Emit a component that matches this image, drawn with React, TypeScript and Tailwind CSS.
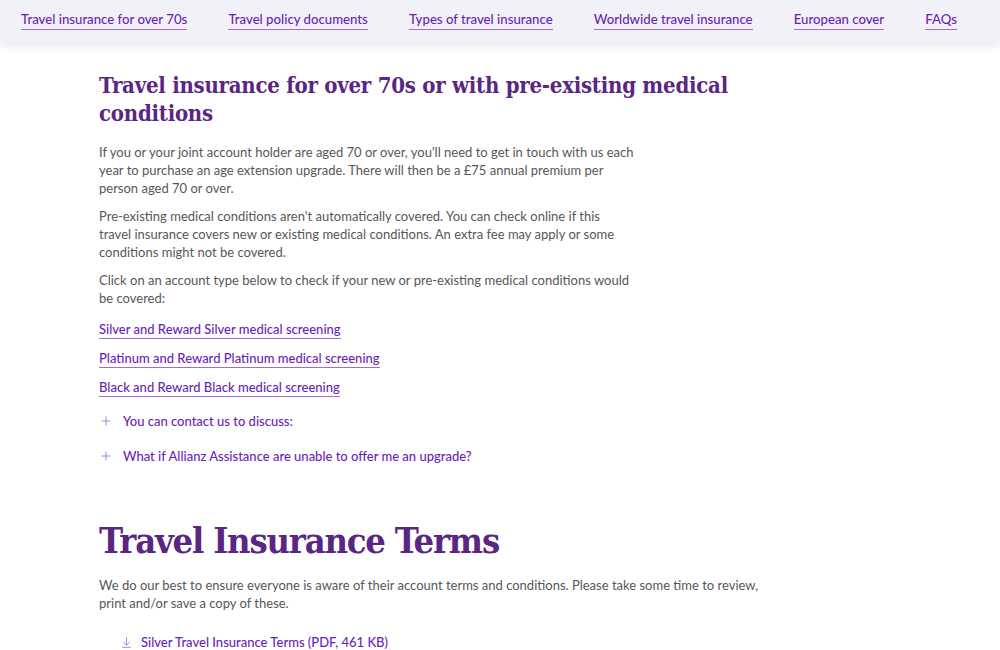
import React from "react";
import { Plus, ArrowDownToLine } from "lucide-react";

const navLinks = [
	"Travel insurance for over 70s",
	"Travel policy documents",
	"Types of travel insurance",
	"Worldwide travel insurance",
	"European cover",
	"FAQs",
];

const screeningLinks = [
	"Silver and Reward Silver medical screening",
	"Platinum and Reward Platinum medical screening",
	"Black and Reward Black medical screening",
];

const accordion = [
	"You can contact us to discuss:",
	"What if Allianz Assistance are unable to offer me an upgrade?",
];

const slab = { fontFamily: '"DejaVu Serif Condensed", "DejaVu Serif", serif' };

export default function App() {
	return (
		<div
			className="min-h-[650px] bg-white text-[#575757]"
			style={{ fontFamily: "Lato, 'Noto Sans', sans-serif" }}
		>
			{/* Sub navigation */}
			<nav className="h-[43px] bg-[#f2f1f7] shadow-[0_4px_8px_rgba(0,0,0,0.08)] flex items-center justify-between pl-[21px] pr-[43px] pb-[4px]">
				{navLinks.map((l) => (
					<a
						key={l}
						href="#"
						className="text-[13.2px] font-medium text-[#6b1fb8] border-b border-[#a36be0] leading-[18px] pb-[1px]"
					>
						{l}
					</a>
				))}
			</nav>

			<main className="pl-[99px] pt-[28px]">
				<section className="w-[640px]">
					<h2
						className="text-[22px] leading-[28px] font-bold tracking-[-0.25px] text-[#5a2683]"
						style={slab}
					>
						Travel insurance for over 70s or with pre-existing medical conditions
					</h2>

					<div className="w-[535px] mt-[16px] text-[13px] leading-[18px] flex flex-col gap-[10px]">
						<p>
							If you or your joint account holder are aged 70 or over, you'll need to get in
							touch with us each year to purchase an age extension upgrade. There will then
							be a £75 annual premium per person aged 70 or over.
						</p>
						<p>
							Pre-existing medical conditions aren't automatically covered. You can check
							online if this travel insurance covers new or existing medical conditions. An
							extra fee may apply or some conditions might not be covered.
						</p>
						<p>
							Click on an account type below to check if your new or pre-existing medical
							conditions would be covered:
						</p>
					</div>

					<div className="mt-[14px] flex flex-col items-start gap-[11px]">
						{screeningLinks.map((l) => (
							<a
								key={l}
								href="#"
								className="text-[13px] font-medium leading-[17px] text-[#6b1fb8] border-b border-[#a36be0]"
							>
								{l}
							</a>
						))}
					</div>

					<div className="mt-[15px] flex flex-col gap-[17px]">
						{accordion.map((a) => (
							<button
								key={a}
								className="flex items-center gap-[10px] text-[13px] font-medium leading-[18px] text-[#6b1fb8] text-left"
							>
								<Plus size={14} strokeWidth={1.3} className="text-[#8a5cc8]" />
								{a}
							</button>
						))}
					</div>
				</section>

				<section className="mt-[53px] w-[660px]">
					<h1
						className="text-[36px] leading-[44px] font-bold tracking-[-1.2px] text-[#5a2683]"
						style={slab}
					>
						Travel Insurance Terms
					</h1>
					<p className="mt-[14px] text-[13px] leading-[18px]">
						We do our best to ensure everyone is aware of their account terms and conditions.
						Please take some time to review, print and/or save a copy of these.
					</p>
					<a
						href="#"
						className="mt-[21px] ml-[21px] flex items-center gap-[8px] text-[13px] font-medium leading-[18px] text-[#6b1fb8]"
					>
						<ArrowDownToLine size={13} strokeWidth={1.3} className="text-[#8a5cc8]" />
						Silver Travel Insurance Terms (PDF, 461 KB)
					</a>
				</section>
			</main>
		</div>
	);
}
